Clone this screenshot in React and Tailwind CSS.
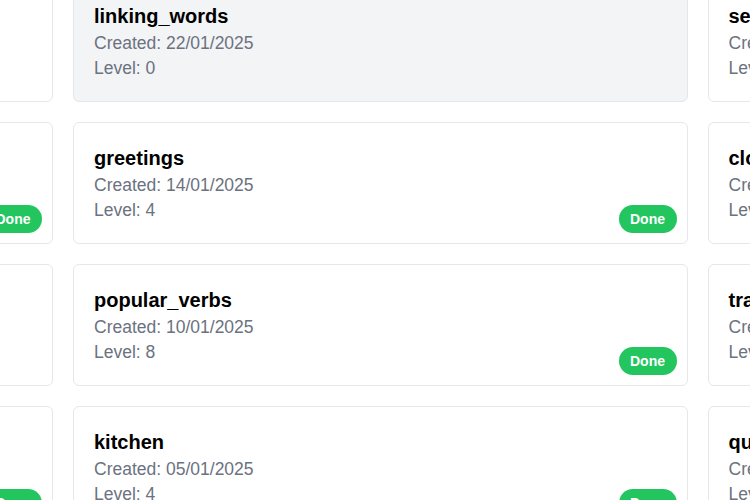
import React from 'react';

const rows = [
  [
    { title: 'numbers', created: '28/01/2025', level: 2, done: false },
    { title: 'linking_words', created: '22/01/2025', level: 0, done: false, active: true },
    { title: 'sentences', created: '20/01/2025', level: 1, done: false },
  ],
  [
    { title: 'colors', created: '16/01/2025', level: 5, done: true },
    { title: 'greetings', created: '14/01/2025', level: 4, done: true },
    { title: 'clothes', created: '12/01/2025', level: 3, done: false },
  ],
  [
    { title: 'family', created: '11/01/2025', level: 3, done: false },
    { title: 'popular_verbs', created: '10/01/2025', level: 8, done: true },
    { title: 'transport', created: '08/01/2025', level: 2, done: false },
  ],
  [
    { title: 'animals', created: '06/01/2025', level: 6, done: true },
    { title: 'kitchen', created: '05/01/2025', level: 4, done: true },
    { title: 'questions', created: '03/01/2025', level: 1, done: false },
  ],
];

const LessonCard = ({ lesson }) => (
  <div
    className={`relative rounded-md border border-[#e5e7eb] p-5 ${lesson.active ? 'bg-[#f3f4f6]' : 'bg-white'}`}
  >
    <h3 className="text-[20px] leading-[30px] font-bold text-black">{lesson.title}</h3>
    <p className="text-[17.5px] leading-[25px] text-[#6b7280]">Created: {lesson.created}</p>
    <p className="text-[17.5px] leading-[25px] text-[#6b7280]">Level: {lesson.level}</p>
    {lesson.done && (
      <span className="absolute right-[10px] bottom-[10px] rounded-full bg-[#22c55e] px-[11.5px] py-1 text-[14px] leading-5 font-bold text-white">
        Done
      </span>
    )}
  </div>
);

export default function App() {
  return (
    <div
      className="w-[750px] h-[500px] overflow-hidden bg-white"
      style={{ fontFamily: '"Liberation Sans", Arial, sans-serif' }}
    >
      <div className="-ml-[561.5px] -mt-[20px] grid grid-cols-[614.5px_614.5px_614.5px] gap-5">
        {rows.flat().map((lesson, i) => (
          <LessonCard key={i} lesson={lesson} />
        ))}
      </div>
    </div>
  );
}
